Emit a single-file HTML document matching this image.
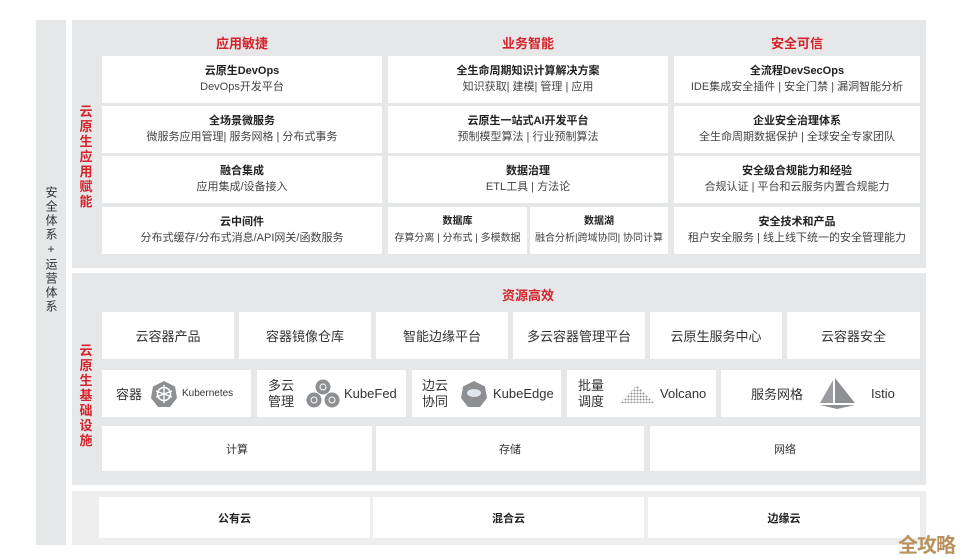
<!DOCTYPE html>
<html><head><meta charset="utf-8"><style>
*{margin:0;padding:0;box-sizing:border-box}
body{width:966px;height:560px;background:#fff;position:relative;overflow:hidden;font-family:"Liberation Sans","Noto Sans CJK SC",sans-serif;color:#333}
.a{position:absolute}
.g{background:#e6e7e9}
.c{position:absolute;background:#fff;display:flex;flex-direction:column;align-items:center;justify-content:center;text-align:center}
.t{font-weight:bold;font-size:11px;color:#222;line-height:16px}
.s{font-size:11px;color:#444;line-height:17px}
.h{position:absolute;color:#d4242b;font-weight:bold;font-size:13px;text-align:center}
.v{position:absolute;color:#d4242b;font-weight:bold;font-size:13px;width:14px;line-height:15px;text-align:center}
.n{font-size:11px;color:#333}
.r{position:absolute;background:#fff;display:flex;align-items:center;justify-content:center;font-size:13px;color:#333}
</style></head><body>
<div class="a g" style="left:36px;top:20px;width:30px;height:525px"></div>
<div class="a" style="left:43px;top:186px;width:16px;font-size:12px;line-height:16px;color:#333;writing-mode:vertical-rl;text-orientation:upright;letter-spacing:2px">安全体系+运营体系</div>

<div class="a g" style="left:72px;top:20px;width:854px;height:248px"></div>
<div class="h" style="left:102px;top:33px;width:280px">应用敏捷</div>
<div class="h" style="left:388px;top:33px;width:280px">业务智能</div>
<div class="h" style="left:674px;top:33px;width:246px">安全可信</div>
<div class="v" style="left:79px;top:104px">云原生应用赋能</div>

<div class="c" style="left:102px;top:56px;width:280px;height:47px"><div class="t">云原生DevOps</div><div class="s">DevOps开发平台</div></div>
<div class="c" style="left:102px;top:106px;width:280px;height:47px"><div class="t">全场景微服务</div><div class="s">微服务应用管理| 服务网格 | 分布式事务</div></div>
<div class="c" style="left:102px;top:156px;width:280px;height:47px"><div class="t">融合集成</div><div class="s">应用集成/设备接入</div></div>
<div class="c" style="left:102px;top:207px;width:280px;height:47px"><div class="t">云中间件</div><div class="s">分布式缓存/分布式消息/API网关/函数服务</div></div>

<div class="c" style="left:388px;top:56px;width:280px;height:47px"><div class="t">全生命周期知识计算解决方案</div><div class="s">知识获取| 建模| 管理 | 应用</div></div>
<div class="c" style="left:388px;top:106px;width:280px;height:47px"><div class="t">云原生一站式AI开发平台</div><div class="s">预制模型算法 | 行业预制算法</div></div>
<div class="c" style="left:388px;top:156px;width:280px;height:47px"><div class="t">数据治理</div><div class="s">ETL工具 | 方法论</div></div>
<div class="c" style="left:388px;top:207px;width:139px;height:47px"><div class="t" style="font-size:10px">数据库</div><div class="s" style="font-size:10px">存算分离 | 分布式 | 多模数据</div></div>
<div class="c" style="left:530px;top:207px;width:138px;height:47px"><div class="t" style="font-size:10px">数据湖</div><div class="s" style="font-size:10px">融合分析|跨域协同| 协同计算</div></div>

<div class="c" style="left:674px;top:56px;width:246px;height:47px"><div class="t">全流程DevSecOps</div><div class="s">IDE集成安全插件 | 安全门禁 | 漏洞智能分析</div></div>
<div class="c" style="left:674px;top:106px;width:246px;height:47px"><div class="t">企业安全治理体系</div><div class="s">全生命周期数据保护 | 全球安全专家团队</div></div>
<div class="c" style="left:674px;top:156px;width:246px;height:47px"><div class="t">安全级合规能力和经验</div><div class="s">合规认证 | 平台和云服务内置合规能力</div></div>
<div class="c" style="left:674px;top:207px;width:246px;height:47px"><div class="t">安全技术和产品</div><div class="s">租户安全服务 | 线上线下统一的安全管理能力</div></div>

<div class="a g" style="left:72px;top:273px;width:854px;height:212px"></div>
<div class="h" style="left:388px;top:285px;width:280px">资源高效</div>
<div class="v" style="left:79px;top:343px">云原生基础设施</div>

<div class="r" style="left:102px;top:312px;width:132px;height:47px">云容器产品</div>
<div class="r" style="left:239px;top:312px;width:132px;height:47px">容器镜像仓库</div>
<div class="r" style="left:376px;top:312px;width:132px;height:47px">智能边缘平台</div>
<div class="r" style="left:513px;top:312px;width:132px;height:47px">多云容器管理平台</div>
<div class="r" style="left:650px;top:312px;width:132px;height:47px">云原生服务中心</div>
<div class="r" style="left:787px;top:312px;width:133px;height:47px">云容器安全</div>

<div class="r" style="left:102px;top:370px;width:149px;height:47px;justify-content:flex-start;padding-left:14px">容器
<svg width="28" height="28" viewBox="0 0 28 28" style="margin:0 4px 0 8px"><polygon points="14,1 25,6.5 27,18 20,27 8,27 1,18 3,6.5" fill="#8d8f92"/><circle cx="14" cy="14" r="6.5" fill="none" stroke="#fff" stroke-width="1.6"/><g stroke="#fff" stroke-width="1.4"><line x1="14" y1="5" x2="14" y2="23"/><line x1="6" y1="11" x2="22" y2="17"/><line x1="6" y1="17" x2="22" y2="11"/></g></svg><span style="font-size:10px">Kubernetes</span></div>
<div class="r" style="left:257px;top:370px;width:149px;height:47px;justify-content:flex-start;padding-left:11px"><span style="line-height:16px">多云<br>管理</span>
<svg width="34" height="30" viewBox="0 0 34 30" style="margin:0 4px 0 12px"><g fill="#8d8f92"><circle cx="17" cy="8" r="7.5"/><circle cx="8" cy="21" r="7.5"/><circle cx="26" cy="21" r="7.5"/></g><g fill="none" stroke="#fff" stroke-width="1"><circle cx="17" cy="8" r="3"/><circle cx="8" cy="21" r="3"/><circle cx="26" cy="21" r="3"/></g></svg>KubeFed</div>
<div class="r" style="left:412px;top:370px;width:149px;height:47px;justify-content:flex-start;padding-left:10px"><span style="line-height:16px">边云<br>协同</span>
<svg width="28" height="28" viewBox="0 0 28 28" style="margin:0 5px 0 12px"><polygon points="14,1 25,6.5 27,18 20,27 8,27 1,18 3,6.5" fill="#8d8f92"/><ellipse cx="14" cy="13" rx="7" ry="4" fill="#dfe6ee"/></svg>KubeEdge</div>
<div class="r" style="left:567px;top:370px;width:149px;height:47px;justify-content:flex-start;padding-left:11px"><span style="line-height:16px">批量<br>调度</span>
<svg width="38" height="22" viewBox="0 0 38 22" style="margin:0 4px 0 14px"><defs><pattern id="d" width="3" height="3" patternUnits="userSpaceOnUse"><circle cx="1.5" cy="1.5" r="1" fill="#8d8f92"/></pattern></defs><polygon points="19,2 36,20 2,20" fill="url(#d)"/></svg>Volcano</div>
<div class="r" style="left:721px;top:370px;width:199px;height:47px;justify-content:flex-start;padding-left:30px">服务网格
<svg width="38" height="32" viewBox="0 0 38 32" style="margin:0 14px 0 16px"><polygon points="14,2 14,25 1,25" fill="#9a9c9f"/><polygon points="16,0 36,25 16,25" fill="#8d8f92"/><polygon points="1,27 36,27 18,31" fill="#8d8f92"/></svg>Istio</div>

<div class="r n" style="left:102px;top:426px;width:270px;height:45px;font-size:11px">计算</div>
<div class="r n" style="left:376px;top:426px;width:268px;height:45px;font-size:11px">存储</div>
<div class="r n" style="left:650px;top:426px;width:270px;height:45px;font-size:11px">网络</div>

<div class="a" style="left:72px;top:491px;width:854px;height:54px;background:#eeeeef"></div>
<div class="r" style="left:99px;top:497px;width:271px;height:41px;font-size:11px;font-weight:bold;color:#222">公有云</div>
<div class="r" style="left:373px;top:497px;width:271px;height:41px;font-size:11px;font-weight:bold;color:#222">混合云</div>
<div class="r" style="left:648px;top:497px;width:272px;height:41px;font-size:11px;font-weight:bold;color:#222">边缘云</div>

<div class="a" style="left:898px;top:529px;font-size:20px;font-weight:bold;color:#b8915e;letter-spacing:-1px">全攻略</div>
</body></html>
